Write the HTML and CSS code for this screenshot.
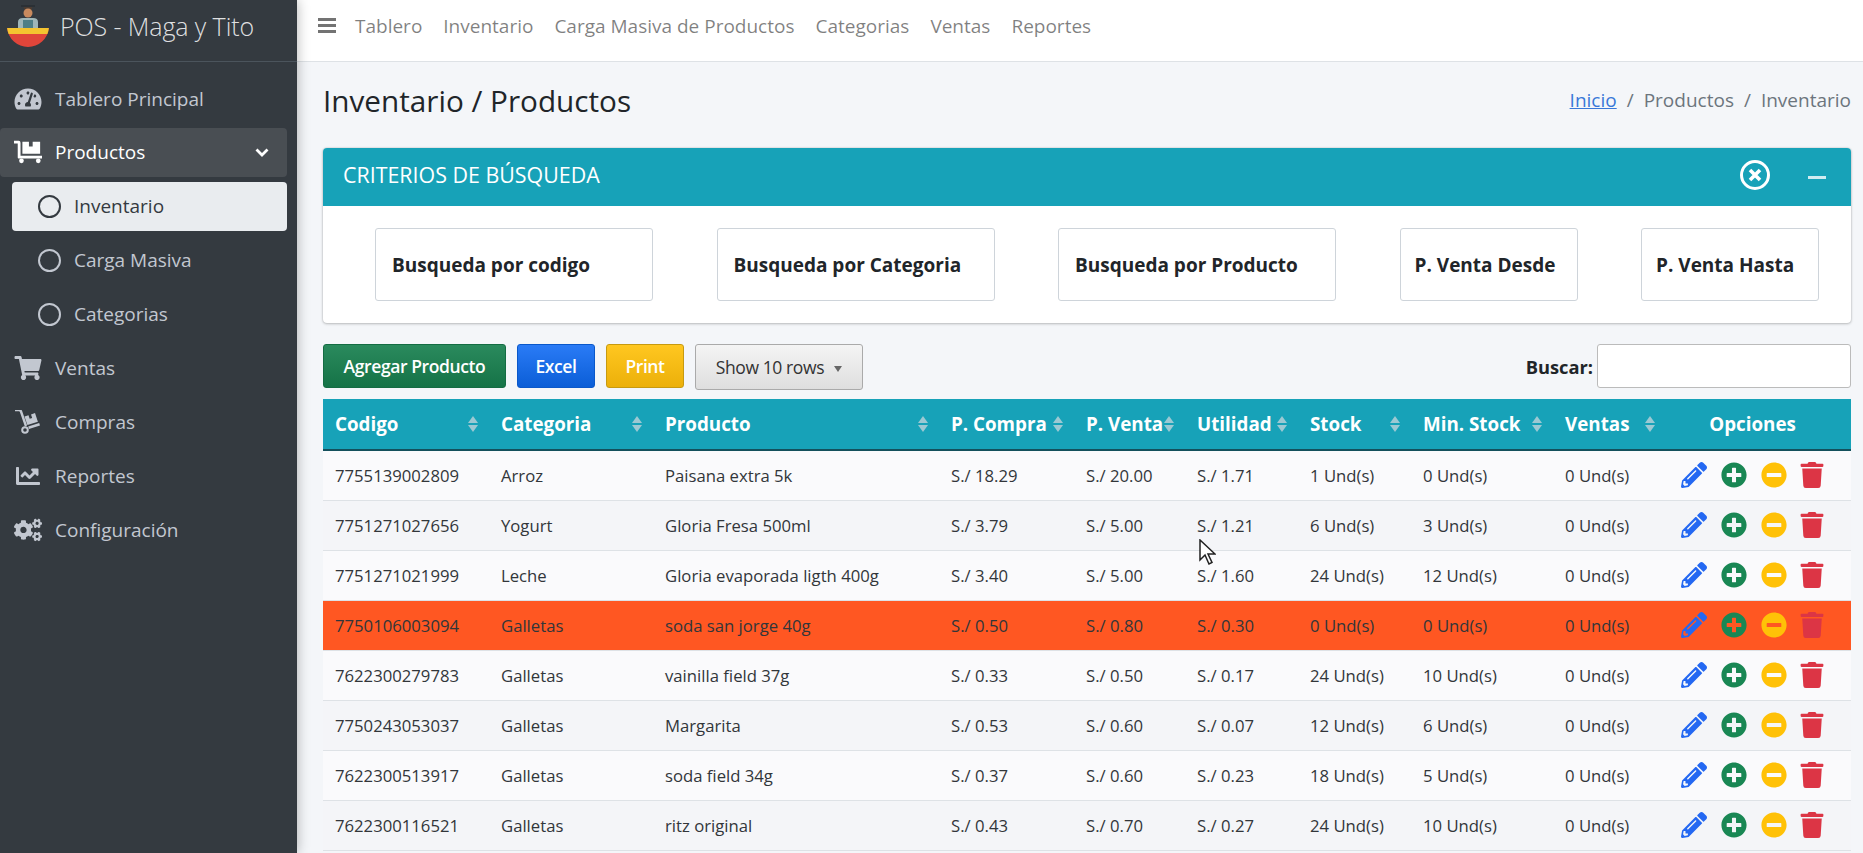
FILE: index.html
```html
<!DOCTYPE html>
<html lang="en">
<head>
    <meta charset="UTF-8">
    <title>POS - Maga y Tito</title>
    <link rel="stylesheet" href="styles.css">
</head>
<body>

<svg class="sprites" width="0" height="0">
    <symbol id="i-edit" viewBox="0 0 512 512"><path d="M497.9 142.1l-46.1 46.1c-4.7 4.7-12.3 4.7-17 0l-111-111c-4.7-4.7-4.7-12.3 0-17l46.1-46.1c18.7-18.7 49.1-18.7 67.9 0l60.1 60.1c18.8 18.7 18.8 49.1 0 67.9zM284.2 99.8L21.6 362.4.4 483.9c-2.9 16.4 11.4 30.6 27.8 27.8l121.5-21.3 262.6-262.6c4.7-4.7 4.7-12.3 0-17l-111-111c-4.8-4.7-12.4-4.7-17.1 0zM124.1 339.9c-5.5-5.5-5.5-14.3 0-19.8l154-154c5.5-5.5 14.3-5.5 19.8 0s5.5 14.3 0 19.8l-154 154c-5.5 5.5-14.3 5.5-19.8 0zM88 424h48v36.3l-64.5 11.3-31.1-31.1L51.7 376H88v48z"/></symbol>
    <symbol id="i-plus" viewBox="0 0 512 512"><path d="M256 8C119 8 8 119 8 256s111 248 248 248 248-111 248-248S393 8 256 8zm144 276c0 6.6-5.4 12-12 12h-92v92c0 6.6-5.4 12-12 12h-56c-6.6 0-12-5.4-12-12v-92h-92c-6.6 0-12-5.4-12-12v-56c0-6.6 5.4-12 12-12h92v-92c0-6.6 5.4-12 12-12h56c6.6 0 12 5.4 12 12v92h92c6.6 0 12 5.4 12 12v56z"/></symbol>
    <symbol id="i-minus" viewBox="0 0 512 512"><path d="M256 8C119 8 8 119 8 256s111 248 248 248 248-111 248-248S393 8 256 8zM124 296c-6.6 0-12-5.4-12-12v-56c0-6.6 5.4-12 12-12h264c6.6 0 12 5.4 12 12v56c0 6.6-5.4 12-12 12H124z"/></symbol>
    <symbol id="i-trash" viewBox="0 0 448 512"><path d="M432 32H312l-9.4-18.7A24 24 0 0 0 281.1 0H166.8a23.72 23.72 0 0 0-21.4 13.3L136 32H16A16 16 0 0 0 0 48v32a16 16 0 0 0 16 16h416a16 16 0 0 0 16-16V48a16 16 0 0 0-16-16zM53.2 467a48 48 0 0 0 47.9 45h245.8a48 48 0 0 0 47.9-45L416 128H32z"/></symbol>
</svg>

<div class="app">
    <aside class="sidebar">
        <div class="brand">
            <svg class="logo" viewBox="0 0 42 42">
                <rect x="14" y="0" width="14" height="2" fill="#2b3035"/>
                <path d="M16.500 2h9l-1 3h-7z" fill="#4a3b32"/>
                <circle cx="21" cy="8" r="4.500" fill="#c98a5e"/>
                <path d="M11 24v-7q0-4 5-4h10q5 0 5 4v7z" fill="#9fb6b8"/>
                <rect x="16" y="15" width="10" height="9" fill="#4f7f86"/>
                <path d="M.1 23h41.800A21 21 0 0 1 .1 23z" fill="#e0453a"/>
                <path d="M.1 23h41.800Q41.500 26 40.400 29H1.600Q.5 26 .1 23z" fill="#f4c430"/>
            </svg>
            <span class="brand-text">POS - Maga y Tito</span>
        </div>
        <nav class="side-nav">
            <a class="side-item">
                <svg class="side-icon" viewBox="0 0 576 512"><path d="M288 32C128.94 32 0 160.94 0 320c0 52.8 14.25 102.26 39.06 144.8 5.61 9.62 16.3 15.2 27.44 15.2h443c11.14 0 21.83-5.58 27.44-15.2C561.75 422.26 576 372.8 576 320c0-159.06-128.94-288-288-288zm0 64c14.71 0 26.58 10.13 30.32 23.65-1.11 2.26-2.64 4.23-3.45 6.67l-9.22 27.67c-5.13 3.49-10.97 6.01-17.64 6.01-17.67 0-32-14.33-32-32S270.33 96 288 96zM96 384c-17.67 0-32-14.33-32-32s14.33-32 32-32 32 14.33 32 32-14.33 32-32 32zm48-160c-17.67 0-32-14.33-32-32s14.33-32 32-32 32 14.33 32 32-14.33 32-32 32zm246.77-72.41l-61.33 184C343.13 347.33 352 364.54 352 384c0 11.72-3.38 22.55-8.88 32H232.88c-5.5-9.45-8.88-20.28-8.88-32 0-33.94 26.5-61.43 59.9-63.59l61.34-184.01c4.17-12.56 17.73-19.45 30.36-15.17 12.57 4.19 19.35 17.79 15.17 30.36zm14.66 57.2l15.52-46.55c3.47-1.29 7.13-2.23 11.05-2.23 17.67 0 32 14.33 32 32s-14.33 32-32 32c-11.38-.01-20.89-6.28-26.57-15.22zM480 384c-17.67 0-32-14.33-32-32s14.33-32 32-32 32 14.33 32 32-14.33 32-32 32z"/></svg>
                Tablero Principal
            </a>
            <a class="side-item open">
                <svg class="side-icon" viewBox="0 0 30 24"><path d="M0 0h5q2 0 2 2v14h23v3H5q-1 0-1-1V3H0z"/><path d="M9 1h7v5h4V1h8v13H9z"/><circle cx="8" cy="21.5" r="2.5"/><circle cx="26" cy="21.5" r="2.5"/></svg>
                Productos
                <svg class="chevron" viewBox="0 0 14 10"><path d="M1.5 2.5 7 8l5.5-5.5" fill="none" stroke="currentColor" stroke-width="2.8"/></svg>
            </a>
            <a class="side-item sub current"><span class="ring"></span>Inventario</a>
            <a class="side-item sub"><span class="ring"></span>Carga Masiva</a>
            <a class="side-item sub"><span class="ring"></span>Categorias</a>
            <a class="side-item">
                <svg class="side-icon" viewBox="0 0 576 512"><path d="M528.12 301.319l47.273-208C578.806 78.301 567.391 64 551.99 64H159.208l-9.166-44.81C147.758 8.021 137.93 0 126.529 0H24C10.745 0 0 10.745 0 24v16c0 13.255 10.745 24 24 24h69.883l70.248 343.435C147.325 417.1 136 435.222 136 456c0 30.928 25.072 56 56 56s56-25.072 56-56c0-15.674-6.447-29.835-16.824-40h209.647C430.447 426.165 424 440.326 424 456c0 30.928 25.072 56 56 56s56-25.072 56-56c0-22.172-12.888-41.332-31.579-50.405l5.517-24.276c3.413-15.018-8.002-29.319-23.403-29.319H218.117l-6.545-32h293.145c11.206 0 20.92-7.754 23.403-18.681z"/></svg>
                Ventas
            </a>
            <a class="side-item">
                <svg class="side-icon" viewBox="0 0 26 24"><path d="M0 0h4q1.500 0 2 1.500L11 16" fill="none" stroke="currentColor" stroke-width="2.400"/><circle cx="10" cy="20" r="2.800" fill="none" stroke="currentColor" stroke-width="2"/><path d="M14 19l11-3.500-.8-2.400-11 3.500z"/><path d="M9.500 6.500l4-1.300 1.200 3.500 2.500-.8-1.200-3.500 4-1.300 2.900 8.700-10.500 3.300z"/></svg>
                Compras
            </a>
            <a class="side-item">
                <svg class="side-icon" viewBox="0 0 512 512"><path d="M496 384H64V80c0-8.840-7.160-16-16-16H16C7.160 64 0 71.160 0 80v336c0 17.670 14.330 32 32 32h464c8.840 0 16-7.160 16-16v-32c0-8.840-7.160-16-16-16zM464 96H345.940c-21.380 0-32.090 25.850-16.970 40.970l32.400 32.400L288 242.750l-73.370-73.370c-12.500-12.500-32.760-12.500-45.250 0l-68.690 68.690c-6.250 6.250-6.250 16.380 0 22.630l22.620 22.620c6.250 6.250 16.380 6.250 22.630 0L192 237.250l73.370 73.370c12.500 12.500 32.760 12.500 45.250 0l96-96 32.400 32.400c15.120 15.120 40.970 4.410 40.970-16.970V112c.010-8.840-7.150-16-15.990-16z"/></svg>
                Reportes
            </a>
            <a class="side-item">
                <svg class="side-icon" viewBox="0 0 640 512"><path d="M512.1 191l-8.2 14.3c-3 5.3-9.4 7.5-15.1 5.4-11.8-4.4-22.6-10.7-32.1-18.6-4.6-3.8-5.8-10.5-2.8-15.7l8.2-14.3c-6.9-8-12.3-17.3-15.9-27.4h-16.5c-6 0-11.2-4.3-12.2-10.3-2-12-2.1-24.6 0-37.1 1-6 6.2-10.4 12.2-10.4h16.5c3.6-10.1 9-19.4 15.9-27.4l-8.2-14.3c-3-5.2-1.9-11.9 2.8-15.7 9.5-7.9 20.4-14.2 32.1-18.6 5.7-2.1 12.1.1 15.1 5.4l8.2 14.3c10.5-1.9 21.2-1.9 31.7 0L552 6.3c3-5.3 9.4-7.5 15.1-5.4 11.8 4.4 22.6 10.7 32.1 18.6 4.6 3.8 5.8 10.5 2.8 15.7l-8.2 14.3c6.9 8 12.3 17.3 15.9 27.4h16.5c6 0 11.2 4.3 12.2 10.3 2 12 2.1 24.6 0 37.1-1 6-6.2 10.4-12.2 10.4h-16.5c-3.6 10.1-9 19.4-15.9 27.4l8.2 14.3c3 5.2 1.9 11.9-2.8 15.7-9.5 7.9-20.4 14.2-32.1 18.6-5.7 2.1-12.1-.1-15.1-5.4l-8.2-14.3c-10.4 1.9-21.2 1.9-31.7 0zm-10.5-58.8c38.5 29.6 82.4-14.3 52.8-52.8-38.5-29.7-82.4 14.3-52.8 52.8zM386.3 286.1l33.7 16.8c10.1 5.8 14.5 18.1 10.5 29.1-8.9 24.2-26.4 46.4-42.6 65.8-7.4 8.9-20.2 11.1-30.3 5.3l-29.1-16.8c-16 13.7-34.6 24.6-54.9 31.7v33.6c0 11.6-8.3 21.6-19.7 23.6-24.6 4.2-50.4 4.4-75.9 0-11.5-2-20-11.9-20-23.6V418c-20.3-7.2-38.9-18-54.9-31.7L74 403c-10 5.8-22.9 3.6-30.3-5.3-16.2-19.4-33.3-41.6-42.2-65.7-4-10.9.4-23.2 10.5-29.1l33.3-16.8c-3.9-20.9-3.9-42.4 0-63.4L12 205.8c-10.1-5.8-14.6-18.1-10.5-29 8.9-24.2 26-46.4 42.2-65.8 7.4-8.9 20.2-11.1 30.3-5.3l29.1 16.8c16-13.7 34.6-24.6 54.9-31.7V57.1c0-11.5 8.2-21.5 19.6-23.5 24.6-4.2 50.5-4.4 76-.1 11.5 2 20 11.9 20 23.6v33.6c20.3 7.2 38.9 18 54.9 31.7l29.1-16.8c10-5.8 22.9-3.6 30.3 5.3 16.2 19.4 33.2 41.6 42.1 65.8 4 10.9.1 23.2-10 29.1l-33.7 16.8c3.9 21 3.9 42.5 0 63.5zm-117.6 21.1c59.2-77-28.7-164.9-105.7-105.7-59.2 77 28.7 164.9 105.7 105.7zm243.4 182.7l-8.2 14.3c-3 5.3-9.4 7.5-15.1 5.4-11.8-4.4-22.6-10.7-32.1-18.6-4.6-3.8-5.8-10.5-2.8-15.7l8.2-14.3c-6.9-8-12.3-17.3-15.9-27.4h-16.5c-6 0-11.2-4.3-12.2-10.3-2-12-2.1-24.6 0-37.1 1-6 6.2-10.4 12.2-10.4h16.5c3.6-10.1 9-19.4 15.9-27.4l-8.2-14.3c-3-5.2-1.9-11.9 2.8-15.7 9.5-7.9 20.4-14.2 32.1-18.6 5.7-2.1 12.1.1 15.1 5.4l8.2 14.3c10.5-1.9 21.2-1.9 31.7 0l8.2-14.3c3-5.3 9.4-7.5 15.1-5.4 11.8 4.4 22.6 10.7 32.1 18.6 4.6 3.8 5.8 10.5 2.8 15.7l-8.2 14.3c6.9 8 12.3 17.3 15.9 27.4h16.5c6 0 11.2 4.3 12.2 10.3 2 12 2.1 24.6 0 37.1-1 6-6.2 10.4-12.2 10.4h-16.5c-3.6 10.1-9 19.4-15.9 27.4l8.2 14.3c3 5.2 1.9 11.9-2.8 15.7-9.5 7.9-20.4 14.2-32.1 18.6-5.7 2.1-12.1-.1-15.1-5.4l-8.2-14.3c-10.4 1.9-21.2 1.9-31.7 0zM501.6 431c38.5 29.6 82.4-14.3 52.8-52.8-38.5-29.6-82.4 14.3-52.8 52.8z"/></svg>
                Configuración
            </a>
        </nav>
    </aside>

    <div class="main">
        <header class="topbar">
            <span class="burger"><i></i><i></i><i></i></span>
            <a>Tablero</a>
            <a>Inventario</a>
            <a>Carga Masiva de Productos</a>
            <a>Categorias</a>
            <a>Ventas</a>
            <a>Reportes</a>
        </header>

        <div class="content">
            <div class="page-head">
                <h1>Inventario / Productos</h1>
                <div class="crumbs"><a href="#">Inicio</a><span>/</span>Productos<span>/</span>Inventario</div>
            </div>

            <section class="card">
                <div class="card-head">
                    <h2>CRITERIOS DE BÚSQUEDA</h2>
                    <svg class="card-close" viewBox="0 0 32 32"><circle cx="16" cy="16" r="13.500" fill="none" stroke="currentColor" stroke-width="3"/><path d="M11 11l10 10M21 11 11 21" stroke="currentColor" stroke-width="3.600"/></svg>
                    <span class="card-min"></span>
                </div>
                <div class="filters">
                    <input class="wide" placeholder="Busqueda por codigo">
                    <input class="wide" placeholder="Busqueda por Categoria">
                    <input class="wide" placeholder="Busqueda por Producto">
                    <input class="narrow" placeholder="P. Venta Desde">
                    <input class="narrow" placeholder="P. Venta Hasta">
                </div>
            </section>

            <div class="toolbar">
                <button class="btn green">Agregar Producto</button>
                <button class="btn blue">Excel</button>
                <button class="btn yellow">Print</button>
                <button class="btn grey">Show 10 rows <span class="caret"></span></button>
                <label class="search">Buscar: <input type="text"></label>
            </div>

            <table class="products">
                <colgroup>
                    <col class="c1"><col class="c2"><col class="c3"><col class="c4"><col class="c5">
                    <col class="c6"><col class="c7"><col class="c8"><col class="c9"><col class="c10">
                </colgroup>
                <thead>
                    <tr>
                        <th><div class="th">Codigo<i class="sort"></i></div></th>
                        <th><div class="th">Categoria<i class="sort"></i></div></th>
                        <th><div class="th">Producto<i class="sort"></i></div></th>
                        <th><div class="th">P. Compra<i class="sort"></i></div></th>
                        <th><div class="th">P. Venta<i class="sort"></i></div></th>
                        <th><div class="th">Utilidad<i class="sort"></i></div></th>
                        <th><div class="th">Stock<i class="sort"></i></div></th>
                        <th><div class="th">Min. Stock<i class="sort"></i></div></th>
                        <th><div class="th">Ventas<i class="sort"></i></div></th>
                        <th class="center">Opciones</th>
                    </tr>
                </thead>
                <tbody id="rows"></tbody>
            </table>
        </div>
    </div>
</div>

<svg class="cursor" viewBox="0 0 17 26"><path d="M1 1v20l5-5 4 9 3-1.500-4-8.500h7z" fill="#fff" stroke="#222" stroke-width="1.500"/></svg>

<script>
    const products = [
        ['7755139002809', 'Arroz', 'Paisana extra 5k', '18.29', '20.00', '1.71', 1, 0],
        ['7751271027656', 'Yogurt', 'Gloria Fresa 500ml', '3.79', '5.00', '1.21', 6, 3],
        ['7751271021999', 'Leche', 'Gloria evaporada ligth 400g', '3.40', '5.00', '1.60', 24, 12],
        ['7750106003094', 'Galletas', 'soda san jorge 40g', '0.50', '0.80', '0.30', 0, 0],
        ['7622300279783', 'Galletas', 'vainilla field 37g', '0.33', '0.50', '0.17', 24, 10],
        ['7750243053037', 'Galletas', 'Margarita', '0.53', '0.60', '0.07', 12, 6],
        ['7622300513917', 'Galletas', 'soda field 34g', '0.37', '0.60', '0.23', 18, 5],
        ['7622300116521', 'Galletas', 'ritz original', '0.43', '0.70', '0.27', 24, 10]
    ];

    const tbody = document.getElementById('rows');
    products.forEach(function (p) {
        const row = document.createElement('tr');
        if (p[6] === 0) row.className = 'empty';
        row.innerHTML = `
            <td>${p[0]}</td><td>${p[1]}</td><td>${p[2]}</td>
            <td>S./ ${p[3]}</td><td>S./ ${p[4]}</td><td>S./ ${p[5]}</td>
            <td>${p[6]} Und(s)</td><td>${p[7]} Und(s)</td><td>0 Und(s)</td>
            <td><div class="actions">
                <svg class="edit"><use href="#i-edit"/></svg>
                <svg class="add"><use href="#i-plus"/></svg>
                <svg class="sub-stock"><use href="#i-minus"/></svg>
                <svg class="del"><use href="#i-trash"/></svg>
            </div></td>`;
        tbody.appendChild(row);
    });
</script>

</body>
</html>
```

FILE: styles.css
```css
* {
    box-sizing: border-box;
}

body {
    margin: 0;
    font-family: "Open Sans", Arial, sans-serif;
    font-size: 16.7px;
    color: #212529;
    background-color: #f4f6f9;
    overflow: hidden;
}

.sprites {
    display: none;
}

.app {
    display: flex;
    height: 853px;
    overflow: hidden;
}

/* sidebar */
.sidebar {
    width: 297px;
    flex-shrink: 0;
    background-color: #343a40;
    box-shadow: 0 0 12px rgba(0, 0, 0, 0.3);
    z-index: 2;
}

.brand {
    display: flex;
    align-items: center;
    gap: 11px;
    height: 62px;
    padding: 0 0 9px 7px;
    border-bottom: 1px solid #4b545c;
}

.logo {
    width: 42px;
    height: 42px;
}

.brand-text {
    font-size: 25px;
    font-weight: 300;
    letter-spacing: -0.1px;
    color: rgba(255, 255, 255, 0.85);
}

.side-nav {
    display: flex;
    flex-direction: column;
    gap: 4.9px;
    padding: 12px 10px 0 0;
    font-size: 19px;
}

.side-item {
    display: flex;
    align-items: center;
    height: 49px;
    padding-left: 14px;
    border-radius: 4px;
    color: #c2c7d0;
}

.side-icon {
    width: 28px;
    height: 24px;
    margin-right: 13px;
    fill: currentColor;
    flex-shrink: 0;
}

.side-item.open {
    background-color: #494e53;
    color: #fff;
}

.chevron {
    width: 14px;
    height: 10px;
    margin-left: auto;
    margin-right: 18px;
}

.side-item.sub {
    margin-left: 12px;
    padding-left: 26px;
}

.side-item.current {
    background-color: #e9ecef;
    color: #343a40;
}

.ring {
    width: 23px;
    height: 23px;
    margin-right: 13px;
    border: 2.5px solid currentColor;
    border-radius: 50%;
}

/* top bar */
.main {
    flex: 1;
    min-width: 0;
}

.topbar {
    display: flex;
    align-items: center;
    height: 62px;
    padding: 0 0 10px 21px;
    background-color: #fff;
    border-bottom: 1px solid #dee2e6;
    font-size: 19px;
    color: rgba(0, 0, 0, 0.5);
}

.burger {
    display: flex;
    flex-direction: column;
    gap: 3px;
    width: 18px;
    margin-right: 19px;
}

.burger i {
    height: 3px;
    background-color: rgba(0, 0, 0, 0.55);
}

.topbar a {
    margin-right: 21px;
}

/* page */
.content {
    padding: 0 12px 0 26px;
}

.page-head {
    display: flex;
    align-items: center;
    justify-content: space-between;
    height: 86px;
    padding-bottom: 10px;
}

h1 {
    margin: 0;
    font-size: 29.7px;
    font-weight: 500;
}

.crumbs {
    font-size: 19px;
    color: #6c757d;
}

.crumbs a {
    color: #3a78d8;
    text-decoration: underline;
}

.crumbs span {
    margin: 0 10px;
}

.card {
    background-color: #fff;
    border-radius: 4px;
    box-shadow: 0 0 2px rgba(0, 0, 0, 0.2), 0 1px 3px rgba(0, 0, 0, 0.2);
}

.card-head {
    display: flex;
    align-items: center;
    height: 58px;
    padding: 0 25px 5px 20px;
    background-color: #17a2b8;
    border-radius: 4px 4px 0 0;
    color: #fff;
}

h2 {
    margin: 0 auto 0 0;
    font-size: 21.4px;
    font-weight: 400;
}

.card-close {
    width: 32px;
    height: 32px;
    margin-right: 37px;
}

.card-min {
    width: 18px;
    height: 3px;
    margin-top: 5px;
    background-color: rgba(255, 255, 255, 0.8);
}

.filters {
    display: flex;
    gap: 63.500px;
    padding: 22px 0 22px 52px;
}

.filters input {
    height: 73px;
    padding: 0 16px;
    background-color: #fff;
    border: 1px solid #ced4da;
    border-radius: 3px;
    font-family: inherit;
    font-size: 19px;
    font-weight: 700;
}

.filters input::placeholder {
    color: #212529;
    opacity: 1;
}

.filters .wide {
    width: 278px;
}

.filters .narrow {
    width: 178px;
    padding: 0 14px;
}

.toolbar {
    display: flex;
    align-items: flex-start;
    gap: 11px;
    padding: 21px 0 9px;
}

.btn {
    height: 44px;
    padding: 0;
    border: 1px solid;
    border-radius: 3px;
    font-family: inherit;
    font-size: 17.5px;
    font-weight: 600;
    letter-spacing: -0.4px;
    color: #fff;
}

.green {
    width: 183px;
    background: linear-gradient(#2a8a5d, #157347);
    border-color: #146c43;
}

.blue {
    width: 78px;
    background: linear-gradient(#2a7bf6, #0b5ed7);
    border-color: #0a58ca;
}

.yellow {
    width: 78px;
    background: linear-gradient(#ffc720, #ecb00a);
    border-color: #c79a10;
}

.grey {
    width: 168px;
    height: 46px;
    background: linear-gradient(#f4f4f4, #dedede);
    border-color: #aaa;
    font-weight: 400;
    color: #333;
}

.caret {
    display: inline-block;
    margin-left: 6px;
    border-top: 6px solid #666;
    border-left: 4px solid transparent;
    border-right: 4px solid transparent;
    vertical-align: 2px;
}

.search {
    display: flex;
    align-items: center;
    gap: 4px;
    margin-left: auto;
    font-size: 18.3px;
    font-weight: 700;
}

.search input {
    width: 254px;
    height: 44px;
    border: 1px solid #bbb;
    border-radius: 3px;
}

/* table */
.products {
    width: 1528px;
    table-layout: fixed;
    border-collapse: collapse;
}

.c1 { width: 166px; }
.c2 { width: 164px; }
.c3 { width: 286px; }
.c4 { width: 135px; }
.c5 { width: 111px; }
.c6 { width: 113px; }
.c7 { width: 113px; }
.c8 { width: 142px; }
.c9 { width: 113px; }
.c10 { width: 185px; }

.products thead tr {
    height: 51px;
    background-color: #17a2b8;
    border-bottom: 2px solid #14505c;
    color: #fff;
}

.products th {
    padding: 0 11px 0 12px;
    font-size: 18.8px;
    text-align: left;
}

.products th.center {
    padding-right: 24px;
    text-align: center;
}

.th {
    display: flex;
    align-items: center;
    justify-content: space-between;
    white-space: nowrap;
}

.sort {
    display: flex;
    flex-direction: column;
    gap: 2px;
}

.sort::before,
.sort::after {
    content: "";
    border-left: 5px solid transparent;
    border-right: 5px solid transparent;
}

.sort::before {
    border-bottom: 7px solid #9cc9d3;
}

.sort::after {
    border-top: 7px solid #9cc9d3;
}

.products td {
    height: 50px;
    padding: 0 12px;
    border-bottom: 1px solid #dee2e6;
    color: #32363a;
    white-space: nowrap;
}

.products tbody tr:nth-child(odd) {
    background-color: #fafafc;
}

.products tbody tr:nth-child(even) {
    background-color: #f4f5f8;
}

.products tbody tr.empty {
    background-color: #ff5722;
}

.actions {
    display: flex;
    align-items: center;
    padding-left: 3px;
    gap: 14px;
}

.actions svg {
    width: 26px;
    height: 26px;
}

.actions .del {
    margin-left: -2px;
}

.edit { fill: #2468f2; }
.add { fill: #198754; }
.sub-stock { fill: #ffc107; }
.del { fill: #dc3545; }

.cursor {
    position: absolute;
    left: 1199px;
    top: 539px;
    width: 17px;
    height: 26px;
    z-index: 3;
}
```
